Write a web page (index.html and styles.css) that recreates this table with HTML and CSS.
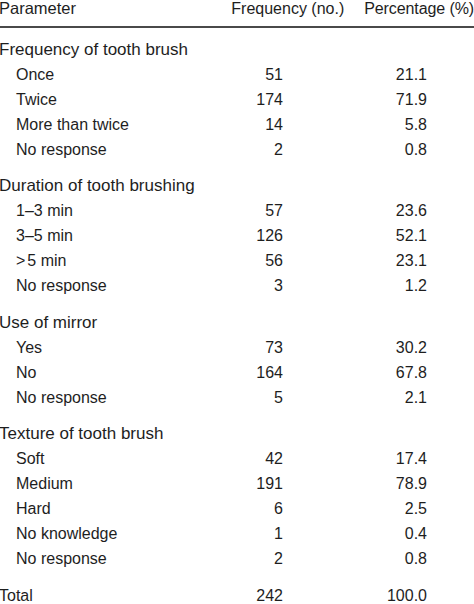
FILE: index.html
```html
<!DOCTYPE html>
<html>
<head>
<meta charset="utf-8">
<link rel="stylesheet" href="styles.css">
</head>
<body>
<div class="table">
  <div class="head">
    <div class="h-param">Parameter</div>
    <div class="h-freq">Frequency (no.)</div>
    <div class="h-pct">Percentage (%)</div>
  </div>

  <div class="group first">
    <div class="row"><div class="lbl cat">Frequency of tooth brush</div><div></div><div></div></div>
    <div class="row"><div class="lbl sub">Once</div><div class="num">51</div><div class="num">21.1</div></div>
    <div class="row"><div class="lbl sub">Twice</div><div class="num">174</div><div class="num">71.9</div></div>
    <div class="row"><div class="lbl sub">More than twice</div><div class="num">14</div><div class="num">5.8</div></div>
    <div class="row"><div class="lbl sub">No response</div><div class="num">2</div><div class="num">0.8</div></div>
  </div>

  <div class="group">
    <div class="row"><div class="lbl cat">Duration of tooth brushing</div><div></div><div></div></div>
    <div class="row"><div class="lbl sub">1–3 min</div><div class="num">57</div><div class="num">23.6</div></div>
    <div class="row"><div class="lbl sub">3–5 min</div><div class="num">126</div><div class="num">52.1</div></div>
    <div class="row"><div class="lbl sub"><span class="gt">&gt;</span>5 min</div><div class="num">56</div><div class="num">23.1</div></div>
    <div class="row"><div class="lbl sub">No response</div><div class="num">3</div><div class="num">1.2</div></div>
  </div>

  <div class="group">
    <div class="row"><div class="lbl cat">Use of mirror</div><div></div><div></div></div>
    <div class="row"><div class="lbl sub">Yes</div><div class="num">73</div><div class="num">30.2</div></div>
    <div class="row"><div class="lbl sub">No</div><div class="num">164</div><div class="num">67.8</div></div>
    <div class="row"><div class="lbl sub">No response</div><div class="num">5</div><div class="num">2.1</div></div>
  </div>

  <div class="group">
    <div class="row"><div class="lbl cat">Texture of tooth brush</div><div></div><div></div></div>
    <div class="row"><div class="lbl sub">Soft</div><div class="num">42</div><div class="num">17.4</div></div>
    <div class="row"><div class="lbl sub">Medium</div><div class="num">191</div><div class="num">78.9</div></div>
    <div class="row"><div class="lbl sub">Hard</div><div class="num">6</div><div class="num">2.5</div></div>
    <div class="row"><div class="lbl sub">No knowledge</div><div class="num">1</div><div class="num">0.4</div></div>
    <div class="row"><div class="lbl sub">No response</div><div class="num">2</div><div class="num">0.8</div></div>
  </div>

  <div class="group total">
    <div class="row"><div class="lbl">Total</div><div class="num">242</div><div class="num">100.0</div></div>
  </div>
</div>
</body>
</html>
```

FILE: styles.css
```css
html, body {
  margin: 0;
  padding: 0;
  background: #ffffff;
}
body {
  width: 474px;
  height: 604px;
  overflow: hidden;
  font-family: "Liberation Sans", Arial, Helvetica, sans-serif;
  font-size: 16px;
  color: #1e1e1e;
}
.table {
  margin-left: -1px;
}
.head {
  display: flex;
  align-items: baseline;
  line-height: 16px;
  padding-bottom: 9px;
  border-bottom: 2px solid #4a4a4a;
  white-space: nowrap;
}
.h-param {
  flex: 1;
  font-size: 16.5px;
}
.h-freq {
  margin-right: 20px;
}
.h-pct {
  letter-spacing: -0.1px;
}
.group {
  margin-top: 11.5px;
}
.group.first {
  margin-top: 8.5px;
}
.row {
  display: grid;
  grid-template-columns: 1fr 80px 144px;
  padding-right: 47px;
  height: 25px;
  line-height: 25px;
  white-space: nowrap;
}
.cat {
  font-size: 17px;
}
.sub {
  padding-left: 17px;
}
.num {
  text-align: right;
}
.gt {
  margin-right: 2px;
}
.group.total {
  margin-top: 17.4px;
}
.group.total .row {
  height: 16px;
  line-height: 16px;
}
```
